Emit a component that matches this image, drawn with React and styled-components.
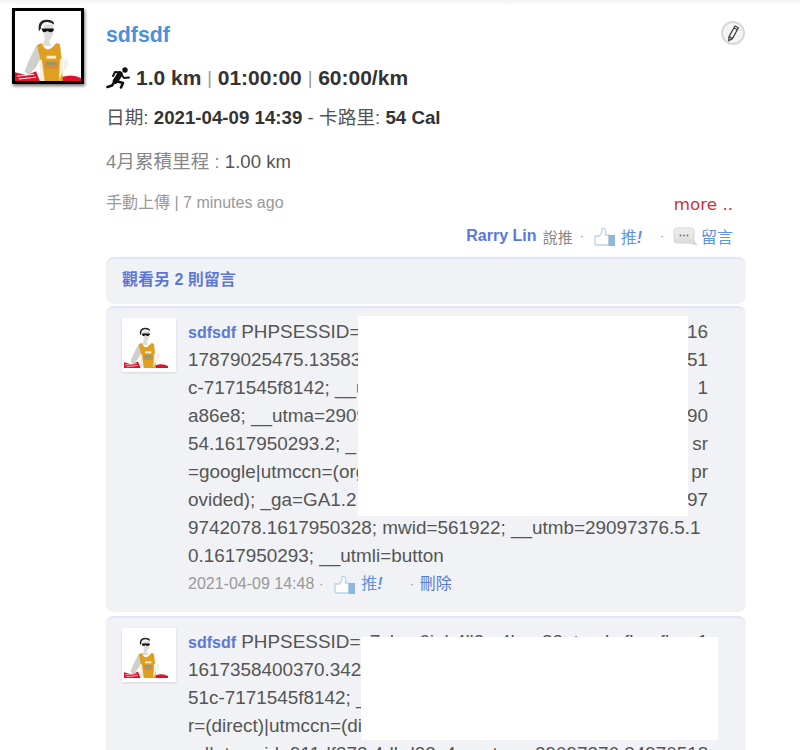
import React from "react";
import styled, { createGlobalStyle } from "styled-components";

const sans = `"Liberation Sans", "Noto Sans CJK TC", sans-serif`;

const Global = createGlobalStyle`
  html, body { margin: 0; padding: 0; background: #fff; }
  body { font-family: ${sans}; width: 800px; height: 750px; overflow: hidden; }
`;

const Page = styled.div`
  position: relative;
  width: 800px;
  height: 750px;
  overflow: hidden;
  box-sizing: border-box;
  padding: 8px 54px 0 12px;
  display: flex;
  gap: 22px;
  background: linear-gradient(#f2f2f2, #fff 6px);
`;
const AvatarFrame = styled.div`
  flex: none;
  width: 66px;
  height: 70px;
  border: 3px solid #000;
  background: #fff;
  box-shadow: 1px 2px 3px rgba(0, 0, 0, 0.55);
  svg { display: block; width: 100%; height: 100%; filter: blur(0.4px); }
`;
const Main = styled.div`
  flex: 1;
  min-width: 0;
  position: relative;
`;
const Name = styled.a`
  display: block;
  margin-top: 15px;
  font-size: 21.3px;
  line-height: 24px;
  font-weight: 700;
  color: #4a90d9;
`;
const EditButton = styled.div`
  position: absolute;
  top: 13px;
  right: 1px;
  width: 24px;
  height: 24px;
  box-sizing: border-box;
  border: 2px solid #d8d8d8;
  border-radius: 50%;
  background: #f4f4f4;
  display: flex;
  align-items: center;
  justify-content: center;
`;
const Stats = styled.div`
  display: flex;
  align-items: center;
  margin-top: 18px;
  height: 26px;
  font-size: 21px;
  font-weight: 700;
  color: #333;
  white-space: pre;
  svg { margin-right: 5px; }
`;
const Pipe = styled.span`
  font-weight: 400;
  font-size: 18px;
  color: #999;
`;
const Detail = styled.div`
  margin-top: 16px;
  font-size: 18.7px;
  line-height: 22px;
  color: #555;
  b { color: #333; }
`;
const Monthly = styled.div`
  margin-top: 22px;
  font-size: 18.6px;
  line-height: 22px;
  color: #888;
  span { color: #555; }
`;
const Meta = styled.div`
  margin-top: 20px;
  font-size: 16px;
  line-height: 20px;
  color: #999;
`;
const More = styled.div`
  margin-top: -19px;
  text-align: right;
  padding-right: 13px;
  font-family: "DejaVu Sans", sans-serif;
  font-size: 16.7px;
  line-height: 20px;
  color: #c9323e;
`;
const Actions = styled.div`
  margin-top: 11px;
  height: 22px;
  padding-right: 13px;
  display: flex;
  justify-content: flex-end;
  align-items: center;
  font-size: 15px;
  color: #888;
`;
const Person = styled.a`
  margin-right: 2px;
  font-size: 16px;
  font-weight: 700;
  color: #5b78d6;
`;
const Dot = styled.span`
  margin: 0 ${(p) => p.$after || 7}px 0 ${(p) => p.$before || 5}px;
  font-size: 12px;
  color: #888;
`;
const Link = styled.a`
  font-size: 16px;
  color: ${(p) => (p.$dark ? "#5b78d6" : "#5f93e0")};
  i { font-weight: 700; }
`;
const IconSlot = styled.span`
  display: inline-flex;
  margin-right: ${(p) => p.$gap || 5}px;
`;
const Panel = styled.div`
  box-sizing: border-box;
  background: #f1f2f5;
  border-top: 2px solid #e2e5f3;
  border-radius: 8px;
  margin-bottom: ${(p) => p.$after || 2}px;
`;
const MoreComments = styled(Panel)`
  margin-top: 10px;
  height: 47px;
  padding: 0 0 8px 16px;
  display: flex;
  align-items: center;
  font-size: 16px;
  font-weight: 700;
  color: #5b78d6;
`;
const Comment = styled(Panel)`
  position: relative;
  height: ${(p) => p.$height}px;
  padding: 10px 38px 0 16px;
  display: flex;
  gap: 12px;
`;
const Thumb = styled.div`
  flex: none;
  width: 54px;
  height: 54px;
  box-sizing: border-box;
  padding: 4px 8px 4px 2px;
  background: #fff;
  box-shadow: 0 1px 2px rgba(0, 0, 0, 0.12);
  svg { display: block; width: 100%; height: 100%; filter: blur(0.3px); }
`;
const Body = styled.div`
  flex: 1;
  min-width: 0;
  font-size: 18.9px;
  line-height: 28px;
  color: #555;
`;
const Line = styled.div`
  display: flex;
  justify-content: space-between;
  white-space: pre;
  height: 28px;
`;
const Author = styled.a`
  font-size: 16px;
  font-weight: 700;
  color: #5b78d6;
`;
const CommentMeta = styled.div`
  display: flex;
  align-items: center;
  height: 28px;
  font-size: 16px;
  color: #999;
`;
const Redaction = styled.div`
  position: absolute;
  background: #fff;
  left: ${(p) => p.$left}px;
  top: ${(p) => p.$top}px;
  width: ${(p) => p.$width}px;
  height: ${(p) => p.$height}px;
`;

const AvatarArt = () => (
  <svg viewBox="0 0 69 72" preserveAspectRatio="none">
    <path d="M52 48 L56 52 L54 60 L50 62Z" fill="#f6efe6" />
    <path d="M10 62 L14 52 L22 36 L26 34 L28 46 L22 58 L14 66Z" fill="#cfcfcb" />
    <path d="M0 63 L12 66 L22 62 L26 72 H0Z" fill="#e2102a" />
    <path d="M2 67 L20 65 M4 70 L22 68" stroke="#fff" strokeWidth="1" />
    <path d="M49 68 Q60 64 69 69 V72 H49Z" fill="#e2102a" />
    <path d="M30 14 L40 14 L40 24 L36 31 L38 36 L28 36 L31 29Z" fill="#dcdcd8" />
    <path d="M25 21 Q23 9 33 9 Q41 9 41 14 Q35 10 30 12 Q27 14 27 18Z" fill="#262626" />
    <path d="M27.5 18 H40.5 V20 Q38 23 35 21 L33.5 20.5 Q31 23 29 21Z" fill="#111" />
    <path d="M23 35 L28 33 Q33 46 43 33 L47 34 L49 52 L50 72 L27 72 L27 52Z" fill="#dfa022" />
    <path d="M33 46 H43 V49 H33Z" fill="#fbeecb" />
    <path d="M31 52 H45 V59 H31Z" fill="#d98a3a" />
    <path d="M33 53 H42 V55 H33Z" fill="#5fa59a" />
    <path d="M25 52 L28 50 L31 72 H27Z M46 72 L47 50 L51 48 L50 62Z" fill="#f8f0dc" />
  </svg>
);

const Runner = () => (
  <svg width="25" height="22" viewBox="0 0 25 22" fill="none" stroke="#111" strokeLinecap="round" strokeLinejoin="round">
    <circle cx="19" cy="3" r="2.7" fill="#111" stroke="none" />
    <path d="M14 7 L9.5 14" strokeWidth="5.5" />
    <path d="M14 5.5 L9 5 L7 9" strokeWidth="2" />
    <path d="M15 7 L18 11 L23 10.5" strokeWidth="2" />
    <path d="M9 14 L6 18.5 L1.5 20" strokeWidth="2.6" />
    <path d="M10 14 L17 16 L15 20.5" strokeWidth="2.6" />
  </svg>
);

const ThumbUp = () => (
  <svg width="21" height="19" viewBox="0 0 21 19">
    <path d="M1 9 H5.5 L8 5 V1.5 Q11 0.5 11.5 3.5 V8 H15 V18 H2 Q1 18 1 17Z" fill="#fff" stroke="#bcd2e6" strokeWidth="1.3" strokeLinejoin="round" />
    <rect x="14.5" y="8" width="6.5" height="11" fill="#8fb8d8" />
  </svg>
);

const Bubble = () => (
  <svg width="24" height="19" viewBox="0 0 24 19">
    <defs>
      <linearGradient id="bubbleFill" x1="0" y1="0" x2="0" y2="1">
        <stop offset="0" stopColor="#f0f0f0" />
        <stop offset="1" stopColor="#d8d8d8" />
      </linearGradient>
    </defs>
    <path d="M4 1 H18 Q21 1 21 4 V13 Q21 15 24 18 L17 16 H4 Q1 16 1 13 V4 Q1 1 4 1Z" fill="url(#bubbleFill)" stroke="#d4d4d4" />
    <circle cx="7.5" cy="8.5" r="1" fill="#777" />
    <circle cx="11" cy="8.5" r="1" fill="#777" />
    <circle cx="14.5" cy="8.5" r="1" fill="#777" />
  </svg>
);

const PencilIcon = () => (
  <svg width="14" height="17" viewBox="0 0 14 17" fill="none" stroke="#444" strokeWidth="1.3">
    <path d="M9 1 L12.4 2.8 L6.4 13.6 L2.8 15.8 L3 11.6Z" strokeLinejoin="round" />
    <path d="M8 3 L11.4 4.8" />
    <path d="M3 11.6 L6.4 13.6" />
  </svg>
);

function CommentFooter() {
  return (
    <CommentMeta>
      2021-04-09 14:48<Dot $before={5} $after={11}>·</Dot>
      <IconSlot $gap={6}><ThumbUp /></IconSlot>
      <Link>推<i>!</i></Link>
      <Dot $before={27} $after={6}>·</Dot>
      <Link $dark>刪除</Link>
    </CommentMeta>
  );
}

export default function App() {
  return (
    <Page>
      <Global />
      <AvatarFrame><AvatarArt /></AvatarFrame>
      <Main>
        <Name>sdfsdf</Name>
        <EditButton><PencilIcon /></EditButton>
        <Stats>
          <Runner />
          1.0 km <Pipe>|</Pipe> 01:00:00 <Pipe>|</Pipe> 60:00/km
        </Stats>
        <Detail>日期: <b>2021-04-09 14:39</b> - 卡路里: <b>54 Cal</b></Detail>
        <Monthly>4月累積里程 : <span>1.00 km</span></Monthly>
        <Meta>手動上傳 | 7 minutes ago</Meta>
        <More>more ..</More>
        <Actions>
          <Person>Rarry Lin</Person>&nbsp;說推<Dot $before={7} $after={10}>·</Dot>
          <IconSlot $gap={6}><ThumbUp /></IconSlot>
          <Link>推<i>!</i></Link>
          <Dot $before={18} $after={9}>·</Dot>
          <IconSlot $gap={4}><Bubble /></IconSlot>
          <Link>留言</Link>
        </Actions>
        <MoreComments>觀看另 2 則留言</MoreComments>
        <Comment $height={306} $after={4}>
          <Thumb><AvatarArt /></Thumb>
          <Body>
            <Line><span><Author>sdfsdf</Author> PHPSESSID=</span><span>16</span></Line>
            <Line><span>17879025475.13583</span><span>51</span></Line>
            <Line><span>c-7171545f8142; __u</span><span>1</span></Line>
            <Line><span>a86e8; __utma=2909</span><span>90</span></Line>
            <Line><span>54.1617950293.2; _</span><span>sr</span></Line>
            <Line><span>=google|utmccn=(org</span><span>pr</span></Line>
            <Line><span>ovided); _ga=GA1.2.</span><span>97</span></Line>
            <Line>9742078.1617950328; mwid=561922; __utmb=29097376.5.1</Line>
            <Line>0.1617950293; __utmli=button</Line>
            <CommentFooter />
          </Body>
          <Redaction $left={252} $top={8} $width={330} $height={200} />
        </Comment>
        <Comment $height={200}>
          <Thumb><AvatarArt /></Thumb>
          <Body>
            <Line><span><Author>sdfsdf</Author> PHPSESSID=c7sbzs6iph4ll3m4hno83ntqmkcflmnfk</span><span>1</span></Line>
            <Line>1617358400370.342</Line>
            <Line>51c-7171545f8142; _</Line>
            <Line>r=(direct)|utmccn=(di</Line>
            <Line>nd|utmcsid=911df372.4dbd33c4;__utma=29097376.34970518</Line>
          </Body>
          <Redaction $left={255} $top={19} $width={357} $height={103} />
        </Comment>
      </Main>
    </Page>
  );
}
